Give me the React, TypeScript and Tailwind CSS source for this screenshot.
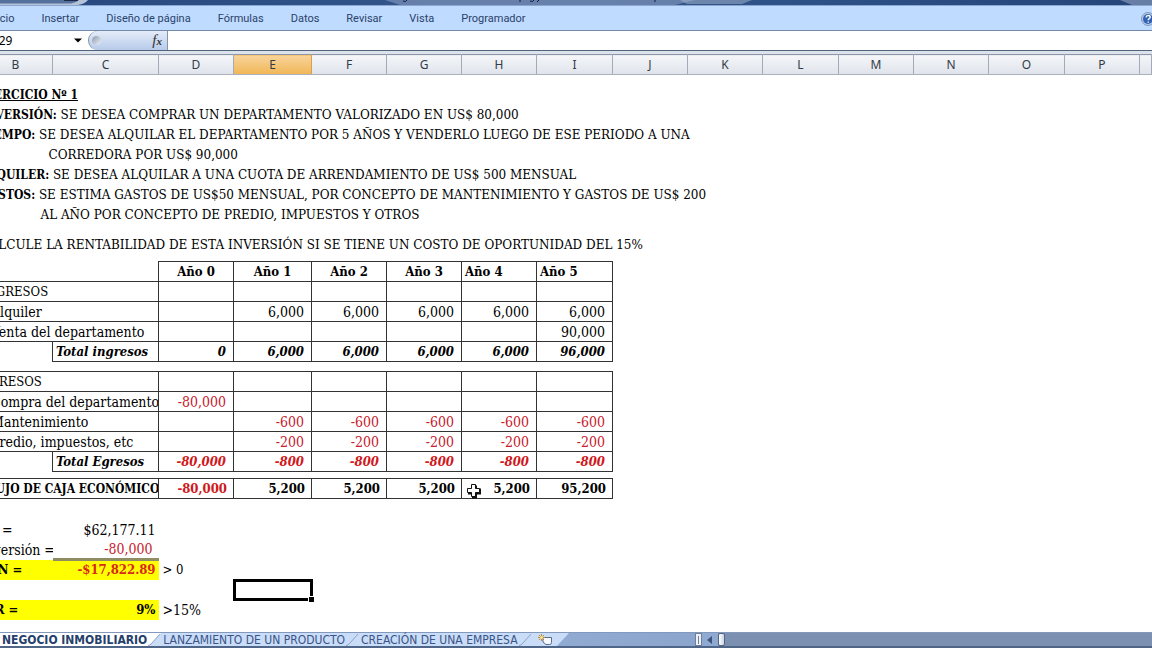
import { useState } from "react";
import clsx from "clsx";

const MENU = ["Inicio", "Insertar", "Diseño de página", "Fórmulas", "Datos", "Revisar", "Vista", "Programador"];

const COLUMNS = [
  { id: "B", width: "w-[74px]" },
  { id: "C", width: "w-[106px]" },
  { id: "D", width: "w-[75px]" },
  { id: "E", width: "w-[78px]" },
  { id: "F", width: "w-[75px]" },
  { id: "G", width: "w-[75px]" },
  { id: "H", width: "w-[75px]" },
  { id: "I", width: "w-[76px]" },
  { id: "J", width: "w-[75px]" },
  { id: "K", width: "w-[75px]" },
  { id: "L", width: "w-[76px]" },
  { id: "M", width: "w-[75px]" },
  { id: "N", width: "w-[75px]" },
  { id: "O", width: "w-[76px]" },
  { id: "P", width: "w-[75px]" },
  { id: "", width: "" },
];

const YEARS = ["Año 0", "Año 1", "Año 2", "Año 3", "Año 4", "Año 5"];

type Line = { label?: string; text: string; indent?: string };

const STATEMENT: Line[] = [
  { label: "INVERSIÓN:", text: "SE DESEA COMPRAR UN DEPARTAMENTO VALORIZADO EN US$ 80,000" },
  { label: "TIEMPO:", text: "SE DESEA ALQUILAR EL DEPARTAMENTO POR 5 AÑOS Y VENDERLO LUEGO DE ESE PERIODO A UNA" },
  { text: "CORREDORA POR US$ 90,000", indent: "pl-[70px]" },
  { label: "ALQUILER:", text: "SE DESEA ALQUILAR A UNA CUOTA DE ARRENDAMIENTO DE US$ 500 MENSUAL" },
  { label: "GASTOS:", text: "SE ESTIMA GASTOS DE US$50 MENSUAL, POR CONCEPTO DE MANTENIMIENTO Y GASTOS DE US$ 200" },
  { text: "AL AÑO POR CONCEPTO DE PREDIO, IMPUESTOS Y OTROS", indent: "pl-[62px]" },
];

type Entry = { label: string; values: string[]; heading?: boolean };

const INCOME: Entry[] = [
  { label: "INGRESOS", values: ["", "", "", "", "", ""], heading: true },
  { label: "Alquiler", values: ["", "6,000", "6,000", "6,000", "6,000", "6,000"] },
  { label: "Venta del departamento", values: ["", "", "", "", "", "90,000"] },
];

const EXPENSES: Entry[] = [
  { label: "EGRESOS", values: ["", "", "", "", "", ""], heading: true },
  { label: "Compra del departamento", values: ["-80,000", "", "", "", "", ""] },
  { label: "Mantenimiento", values: ["", "-600", "-600", "-600", "-600", "-600"] },
  { label: "Predio, impuestos, etc", values: ["", "-200", "-200", "-200", "-200", "-200"] },
];

const CASH_FLOW = ["-80,000", "5,200", "5,200", "5,200", "5,200", "95,200"];

const SHEETS = ["NEGOCIO INMOBILIARIO", "LANZAMIENTO DE UN PRODUCTO", "CREACIÓN DE UNA EMPRESA"];

function Gap({ height }: { height: string }) {
  return (
    <tr className={height}>
      <td colSpan={16} />
    </tr>
  );
}

function EntryRow({ label, values, heading }: Entry) {
  return (
    <tr className="h-5">
      <td
        colSpan={2}
        className={clsx("overflow-hidden border border-[#333]", heading ? "pl-0.5 text-[13px]" : "pl-3")}
      >
        {label}
      </td>
      {values.map((v, i) => (
        <td key={i} className={clsx("border border-[#333] pr-[7px] text-right", v.startsWith("-") && "text-[#c8202c]")}>
          {v}
        </td>
      ))}
    </tr>
  );
}

function TotalRow({ label, values }: Entry) {
  return (
    <tr className="h-5 text-[13px] font-bold italic">
      <td />
      <td className="border border-[#333] pl-[3px]">{label}</td>
      {values.map((v, i) => (
        <td key={i} className={clsx("border border-[#333] pr-[7px] text-right", v.startsWith("-") && "text-[#d01820]")}>
          {v}
        </td>
      ))}
    </tr>
  );
}

function CrossCursor() {
  return (
    <svg className="absolute top-1 left-1 h-[17px] w-4" viewBox="0 0 16 17">
      <path d="M6 2.5h5v3h4v6h-4v4H6v-4H2v-6h4z" fill="#111" />
      <path d="M5.5 1.5h4v4h4v4h-4v4h-4v-4h-4v-4h4z" fill="#fff" stroke="#111" />
    </svg>
  );
}

function TitleStrip() {
  return (
    <div className="relative h-[5px] shrink-0 overflow-hidden bg-linear-to-r from-[#27487e] via-[#34588f] to-[#24457a]">
      <svg className="absolute top-0 left-0 h-[5px] w-[1152px]" viewBox="0 0 1152 5">
        <path d="M0 0h88q-3 4-10 5H0z" fill="#b4c2d8" />
        <path d="M0 0h79q-3 3-8 3.500H0z" fill="#55719d" />
        <path d="M64 0h14v1H64z" fill="#1c2b47" />
        <path d="M385 0h310l-20 5H400z" fill="#7c93b8" opacity=".7" />
        <path d="M680 0h72l-10 4h-55zM1120 0h32v5h-20z" fill="#a9b7cd" opacity=".5" />
        <path d="M403 1q3 1.500 4-1M530 1q3 1.500 4-1M520 0v2M539 0l-2 2M655 0v2" fill="none" stroke="#0e1b33" />
      </svg>
    </div>
  );
}

function HelpIcon() {
  return (
    <svg className="size-[14px]" viewBox="0 0 14 14">
      <circle cx="7" cy="7" r="6.500" fill="#b9cbe6" stroke="#7f97bd" />
      <circle cx="7" cy="7" r="5" fill="#3262b4" />
      <path d="M5 5.500q.3-2 2.200-2 2 0 2 1.600 0 1-1.200 1.700-.8.500-.8 1.400M7.200 9.500v1.300" fill="none" stroke="#fff" strokeWidth="1.400" />
    </svg>
  );
}

// slanted edge between two sheet tabs
function TabEdge({ left, right }: { left: string; right: string }) {
  return (
    <svg className="h-[13px] w-4 shrink-0" viewBox="0 0 16 13">
      <path d="M0 0h16v13H0z" fill={right} />
      <path d="M0 0h14L2 13H0z" fill={left} />
      <path d="M13 1L5 10q-2 2.500-4 2.500" fill="none" stroke="#8ea3c8" />
    </svg>
  );
}

export default function App() {
  const [sheet, setSheet] = useState(SHEETS[0]);

  return (
    <div className="flex h-screen flex-col overflow-hidden bg-white text-black">
      <TitleStrip />

      {/* Ribbon tabs */}
      <nav className="flex h-[26px] shrink-0 items-center justify-between border-t border-b border-t-[#8ba6cf] border-b-[#7389a8] bg-[#bfdbff] pt-0.5 font-['Roboto'] text-[11px] text-[#2b4268]">
        <div className="-ml-3 flex gap-[27px]">
          {MENU.map((m) => (
            <button key={m} className="whitespace-nowrap">
              {m}
            </button>
          ))}
        </div>
        <button aria-label="Ayuda" className="-mr-[3px]">
          <HelpIcon />
        </button>
      </nav>

      {/* Formula bar */}
      <div className="flex h-5 shrink-0 items-stretch border-b border-[#52647c] bg-white">
        <input
          aria-label="Cuadro de nombres"
          defaultValue="E29"
          className="-ml-2 w-[82px] bg-transparent font-['Noto_Sans'] text-xs outline-none"
        />
        <button aria-label="Lista de nombres" className="w-[14px]">
          <svg className="h-[5px] w-2" viewBox="0 0 8 5">
            <path d="M0 .500h8L4 4.500z" fill="#000" />
          </svg>
        </button>
        <div className="flex w-20 items-center justify-between rounded-l-full border-r border-l border-r-[#8494ac] border-l-[#7f8fa8] bg-linear-to-b from-[#e4ecf8] to-[#b7cbea] pr-[5px] pl-[3px]">
          <span className="size-[9px] rounded-full bg-linear-to-br from-[#8d99ab] to-[#eef3fb]" />
          <button aria-label="Insertar función" className="font-['Liberation_Serif'] text-[15px] leading-4 text-[#333] italic">
            f<span className="text-[11px] font-bold">x</span>
          </button>
        </div>
        <input aria-label="Barra de fórmulas" className="min-w-0 flex-1 px-1 outline-none" />
      </div>
      <div className="h-[3px] shrink-0 bg-[#dde3ec]" />

      {/* Sheet */}
      <main className="min-h-0 flex-1 overflow-hidden">
        <table className="-ml-[22px] w-[calc(100%+22px)] table-fixed border-collapse font-['DejaVu_Serif_Condensed','DejaVu_Serif',serif] text-sm leading-[18px] whitespace-nowrap [&_td]:py-0">
          <colgroup>
            {COLUMNS.map((c, i) => (
              <col key={i} className={c.width} />
            ))}
          </colgroup>
          <thead>
            <tr className="h-5 font-['Noto_Sans'] text-xs text-[#333b48]">
              {COLUMNS.map((c, i) => (
                <th
                  key={i}
                  className={clsx(
                    "border border-t-[#8c96a6] border-b-[#aab1bc] p-0 font-normal",
                    c.id === "E"
                      ? "border-x-[#d9a04c] bg-linear-to-b from-[#f8d49a] to-[#f0b654]"
                      : "border-x-[#a3abb8] bg-linear-to-b from-[#f4f6f9] to-[#dfe3ea]",
                  )}
                >
                  {c.id}
                </th>
              ))}
            </tr>
          </thead>
          <tbody>
            <Gap height="h-[10px]" />
            <tr className="h-5 text-xs">
              <td colSpan={16} className="pl-0.5 font-bold underline">
                EJERCICIO Nº 1
              </td>
            </tr>
            {STATEMENT.map((l) => (
              <tr key={l.text} className="h-5 font-['DejaVu_Serif',serif] text-xs">
                <td colSpan={16} className={l.indent ?? "pl-0.5"}>
                  {l.label && <b className="font-['DejaVu_Serif_Condensed',serif]">{l.label} </b>}
                  {l.text}
                </td>
              </tr>
            ))}
            <Gap height="h-[10px]" />
            <tr className="h-5 font-['DejaVu_Serif',serif] text-xs">
              <td colSpan={16} className="pl-0.5">
                CALCULE LA RENTABILIDAD DE ESTA INVERSIÓN SI SE TIENE UN COSTO DE OPORTUNIDAD DEL 15%
              </td>
            </tr>
            <Gap height="h-[7px]" />

            <tr className="h-5 text-[13px]">
              <td colSpan={2} />
              {YEARS.map((y, i) => (
                <th key={y} className={clsx("border border-[#333] py-0", i > 3 ? "pl-[3px] text-left" : "text-center")}>
                  {y}
                </th>
              ))}
            </tr>
            {INCOME.map((e) => (
              <EntryRow key={e.label} {...e} />
            ))}
            <TotalRow label="Total ingresos" values={["0", "6,000", "6,000", "6,000", "6,000", "96,000"]} />
            <Gap height="h-[10px]" />

            {EXPENSES.map((e) => (
              <EntryRow key={e.label} {...e} />
            ))}
            <TotalRow label="Total Egresos" values={["-80,000", "-800", "-800", "-800", "-800", "-800"]} />
            <Gap height="h-[7px]" />

            <tr className="h-5 text-[13px] font-bold">
              <td colSpan={2} className="overflow-hidden border border-[#333] pl-0.5 text-xs leading-[18px]">
                FLUJO DE CAJA ECONÓMICO
              </td>
              {CASH_FLOW.map((v, i) => (
                <td
                  key={i}
                  className={clsx("relative border border-[#333] pr-1.5 text-right", v.startsWith("-") && "text-[#d01820]")}
                >
                  {i === 4 && <CrossCursor />}
                  {v}
                </td>
              ))}
            </tr>
            <Gap height="h-[21px]" />

            <tr className="h-5">
              <td className="pl-0.5">VP =</td>
              <td className="pr-[3px] text-right">$62,177.11</td>
            </tr>
            <tr className="h-5">
              <td className="overflow-hidden pl-0.5">Inversión =</td>
              <td className="border-b-3 border-[#8e8e62] pr-1.5 text-right text-[#c8202c]">-80,000</td>
            </tr>
            <tr className="h-5 text-[13px]">
              <td className="bg-[#ffff00] pl-0.5 font-bold">VAN =</td>
              <td className="bg-[#ffff00] pr-[3px] text-right font-bold text-[#d8281c]">-$17,822.89</td>
              <td className="pl-1">&gt; 0</td>
            </tr>
            <tr className="h-5">
              <td colSpan={3} />
              <td className="relative">
                <div className="absolute -inset-px border-3 border-black" />
                <div className="absolute -right-0.5 -bottom-0.5 size-[6px] border-t border-l border-white bg-black" />
              </td>
            </tr>
            <tr className="h-5 text-[13px]">
              <td className="bg-[#ffff00] pl-0.5 font-bold">TIR =</td>
              <td className="bg-[#ffff00] pr-[3px] text-right font-bold">9%</td>
              <td className="pl-1 text-sm leading-[18px]">&gt;15%</td>
            </tr>
          </tbody>
        </table>
      </main>

      {/* Sheet tabs and scroll bar */}
      <footer className="flex h-4 shrink-0 items-stretch border-t border-b-2 border-t-[#8298bd] border-b-[#4f6688] bg-[#8faad2] font-['DejaVu_Sans_Condensed'] text-xs leading-3">
        <div className="flex flex-[0_0_60.3%] bg-linear-to-r from-[#a9c0e2] to-[#8ba5cd]">
          {SHEETS.map((s, i) => (
            <div key={s} className="flex">
              <button
                onClick={() => setSheet(s)}
                className={clsx(
                  "whitespace-nowrap",
                  i === 0 && "pl-0.5",
                  s === sheet ? "bg-white font-bold text-[#263f6c]" : "bg-[#c9dcf8] text-[#3a5486]",
                )}
              >
                {s}
              </button>
              <TabEdge left={s === sheet ? "#fff" : "#c9dcf8"} right="#c9dcf8" />
            </div>
          ))}
          <button aria-label="Insertar hoja de cálculo" className="bg-[#c9dcf8] pl-1">
            <svg className="h-3 w-[15px]" viewBox="0 0 15 12">
              <path d="M5 3.500h8.500v5q0 2-2 2H8L5 8z" fill="#f7f9fd" stroke="#5a6c8c" />
              <path d="M3.500 0v7M0 3.500h7M1 1l5 5M6 1L1 6" stroke="#b98a35" />
              <circle cx="3.500" cy="3.500" r="1.500" fill="#ffe58a" />
            </svg>
          </button>
          <svg className="h-[13px] w-4" viewBox="0 0 16 13">
            <path d="M0 0h16L4 13H0z" fill="#c9dcf8" />
          </svg>
        </div>
        <div className="w-[7px] border border-[#6f7f98] bg-[#eef2f8] px-0.5">
          <div className="mt-0.5 h-2 w-px bg-[#6f7f98]" />
        </div>
        <button aria-label="Desplazar a la izquierda" className="flex w-4 items-center justify-center">
          <svg className="h-2 w-[5px]" viewBox="0 0 5 8">
            <path d="M5 0v8L0 4z" fill="#3f5478" />
          </svg>
        </button>
        <div className="flex-1 bg-[#7c90b2]">
          <div className="h-full w-[7px] rounded-xs border border-[#55657f] bg-linear-to-r from-white to-[#ccd5e4]" />
        </div>
      </footer>
    </div>
  );
}
